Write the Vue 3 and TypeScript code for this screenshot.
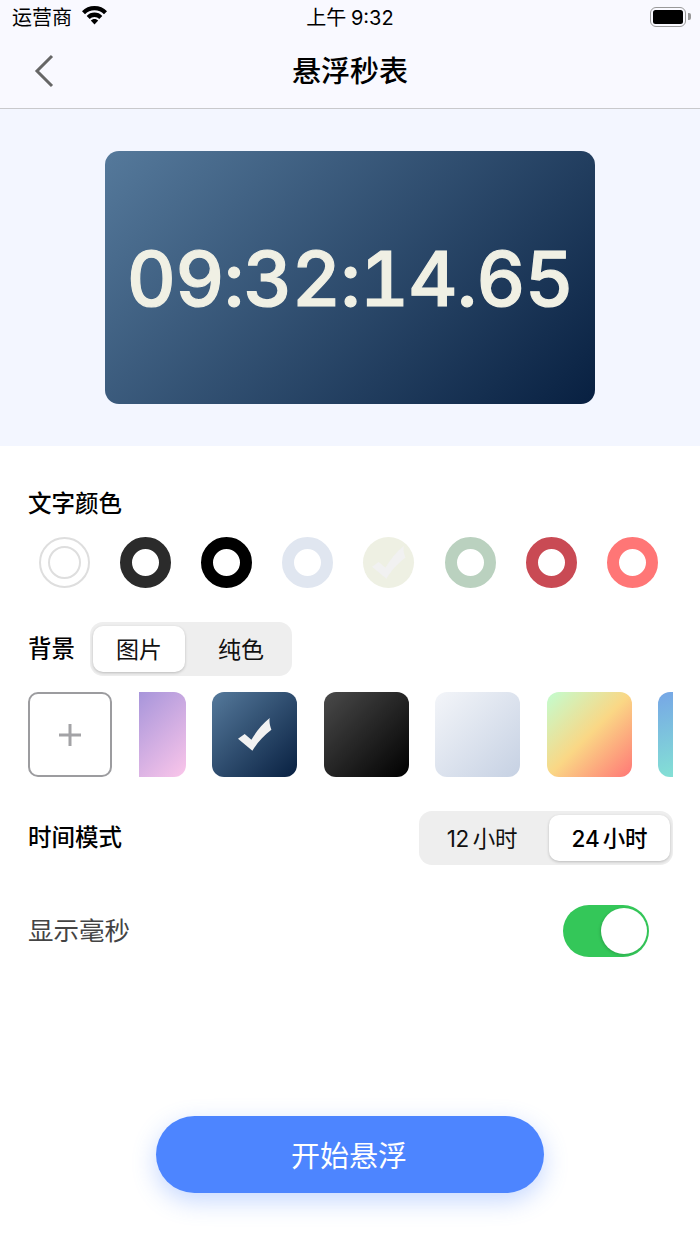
<template>
  <div class="page">
    <header class="top">
      <div class="status-bar">
        <div class="status-left">
          <span>运营商</span>
          <svg class="wifi" width="25" height="19" viewBox="0 0 25 19">
            <path d="M12.5 0C7.6 0 3.2 1.9 0 5.2L3 8.2C5.4 5.7 8.8 4.2 12.5 4.2s7.1 1.5 9.5 4l3-3C21.8 1.9 17.4 0 12.5 0z" fill="#000" />
            <path d="M12.5 6.6c-3 0-5.8 1.2-7.8 3.3l3 3c1.2-1.2 2.9-2 4.8-2s3.600 0.800 4.800 2l3-3c-2-2.100-4.800-3.300-7.800-3.300z" fill="#000" />
            <path d="M12.500 13c-1.500 0-2.800 0.600-3.700 1.500l3.700 4 3.700-4c-0.900-0.900-2.200-1.500-3.700-1.500z" fill="#000" />
          </svg>
        </div>
        <span class="status-time">上午 9:32</span>
        <div class="status-right">
          <span class="battery"><span class="battery-level"></span></span>
          <span class="battery-cap"></span>
        </div>
      </div>
      <div class="nav-bar">
        <svg class="back" width="20" height="34" viewBox="0 0 20 34">
          <path d="M18 2L3 17l15 15" fill="none" stroke="#666" stroke-width="3" />
        </svg>
        <h1 class="nav-title">悬浮秒表</h1>
      </div>
    </header>

    <section class="preview">
      <div class="clock-card">09:32:14.65</div>
    </section>

    <main class="settings">
      <h2 class="label">文字颜色</h2>
      <div class="colors">
        <div
          v-for="c in textColors"
          :key="c.color"
          class="swatch"
          :class="{ 'swatch-outline': c.outline, 'swatch-on': c.selected }"
          :style="{ borderColor: c.color, background: c.selected ? c.color : undefined }"
        >
          <svg v-if="c.selected" width="34" height="33" viewBox="0 0 34 33">
            <path :d="checkPath" fill="#f1f1f1" />
          </svg>
        </div>
      </div>

      <div class="bg-row">
        <h2 class="label">背景</h2>
        <div class="segment bg-segment">
          <div class="seg-item seg-on">图片</div>
          <div class="seg-item">纯色</div>
        </div>
      </div>

      <div class="thumb-row">
        <div class="add-thumb">
          <svg width="22" height="22" viewBox="0 0 22 22">
            <path d="M11 0v22M0 11h22" stroke="#a3a3a6" stroke-width="3" />
          </svg>
        </div>
        <div class="thumb-scroll">
          <div class="thumbs">
            <div class="thumb thumb-purple"></div>
            <div class="thumb thumb-navy">
              <svg width="34" height="33" viewBox="0 0 34 33">
                <path :d="checkPath" fill="#f2f2f2" />
              </svg>
            </div>
            <div class="thumb thumb-black"></div>
            <div class="thumb thumb-silver"></div>
            <div class="thumb thumb-rainbow"></div>
            <div class="thumb thumb-sea"></div>
          </div>
        </div>
      </div>

      <div class="mode-row">
        <h2 class="label">时间模式</h2>
        <div class="segment mode-segment">
          <div class="seg-item mode-item">12 小时</div>
          <div class="seg-item mode-item seg-on seg-strong">24 小时</div>
        </div>
      </div>

      <div class="ms-row">
        <span class="ms-label">显示毫秒</span>
        <div class="toggle"><span class="knob"></span></div>
      </div>

      <button class="start-button">开始悬浮</button>
    </main>
  </div>
</template>

<script setup lang="ts">
interface TextColor {
  color: string
  outline?: boolean
  selected?: boolean
}

const checkPath = 'M0 20.7L6.7 16 13.4 21.700C18 14 24 6 31.700 0 31 4 32 8 33.400 11.700 26 17 19 25 14.400 32.700z'

const textColors: TextColor[] = [
  { color: '#dedede', outline: true },
  { color: '#2b2b2b' },
  { color: '#000000' },
  { color: '#e0e6f0' },
  { color: '#eef0e3', selected: true },
  { color: '#bad1bf' },
  { color: '#c94a54' },
  { color: '#ff7676' }
]
</script>

<style>
html,
body {
  margin: 0;
  background: #fff;
}
</style>

<style scoped>
.page {
  width: 700px;
  height: 1244px;
  overflow: hidden;
  font-family: Inter, "Noto Sans CJK SC", sans-serif;
  color: #000;
  background: #fff;
}

.top {
  background: #f9f9ff;
  border-bottom: 1px solid #c9c9cc;
}

.status-bar {
  height: 36px;
  box-sizing: border-box;
  padding: 0 9px 3px 12px;
  display: grid;
  grid-template-columns: 1fr auto 1fr;
  align-items: center;
  font-size: 20px;
}

.status-left {
  display: flex;
  align-items: center;
  gap: 10px;
}

.wifi {
  margin-top: -2px;
}

.status-time {
  margin-left: -3px;
  word-spacing: -1px;
}

.status-right {
  display: flex;
  justify-content: flex-end;
  align-items: center;
}

.battery {
  width: 36px;
  height: 20px;
  box-sizing: border-box;
  border: 1.5px solid #999;
  border-radius: 6px;
  padding: 2px;
  display: flex;
}

.battery-level {
  flex: 1;
  background: #000;
  border-radius: 2.5px;
}

.battery-cap {
  width: 3px;
  height: 7px;
  margin-left: 2px;
  background: #999;
  border-radius: 0 2px 2px 0;
}

.nav-bar {
  position: relative;
  height: 72px;
  display: flex;
  align-items: center;
  justify-content: center;
}

.back {
  position: absolute;
  left: 34px;
  top: 18px;
}

.nav-title {
  margin: 0;
  font-size: 29px;
  font-weight: 500;
  line-height: 40px;
}

.preview {
  height: 337px;
  background: #f3f6ff;
  display: flex;
  justify-content: center;
  align-items: center;
}

.clock-card {
  width: 490px;
  height: 253px;
  border-radius: 14px;
  background: linear-gradient(135deg, #55799b 0%, #082041 100%);
  color: #f0f0e4;
  font-size: 76px;
  font-weight: 500;
  font-variant-numeric: tabular-nums;
  letter-spacing: -0.8px;
  -webkit-text-stroke: 1.2px #f0f0e4;
  display: flex;
  align-items: center;
  justify-content: center;
}

.settings {
  padding: 40px 27px 0 28px;
}

.label {
  margin: 0;
  font-size: 23.5px;
  font-weight: 500;
  line-height: 36px;
}

.colors {
  display: flex;
  gap: 30.1px;
  margin: 15px 0 0 11.1px;
}

.swatch {
  width: 51px;
  height: 51px;
  box-sizing: border-box;
  border-radius: 50%;
  border: 12px solid;
  display: flex;
  align-items: center;
  justify-content: center;
  flex: none;
}

.swatch-on {
  border-width: 0;
}

.swatch-outline {
  border-width: 2px;
}

.swatch-outline::after {
  content: "";
  width: 33px;
  height: 33px;
  box-sizing: border-box;
  border: 2px solid #dedede;
  border-radius: 50%;
}

.bg-row {
  display: flex;
  align-items: center;
  gap: 15px;
  margin-top: 34px;
}

.segment {
  display: flex;
  height: 54px;
  box-sizing: border-box;
  padding: 4px 3px;
  background: #eeeeee;
  border-radius: 13px;
}

.bg-segment {
  width: 202px;
}

.seg-item {
  display: flex;
  align-items: center;
  justify-content: center;
  width: 92px;
  font-size: 23px;
  padding-bottom: 2px;
  box-sizing: border-box;
  color: #111;
}

.bg-segment .seg-item:last-child {
  flex: 1;
  padding-left: 8px;
}

.seg-on {
  background: #fff;
  border-radius: 10px;
  box-shadow: 0 1px 3px rgba(0, 0, 0, 0.22);
}

.thumb-row {
  display: flex;
  margin-top: 16px;
  gap: 27px;
}

.add-thumb {
  width: 84px;
  height: 85px;
  box-sizing: border-box;
  border: 2px solid #9c9c9f;
  border-radius: 10px;
  display: flex;
  align-items: center;
  justify-content: center;
  flex: none;
}

.thumb-scroll {
  width: 534px;
  overflow: hidden;
}

.thumbs {
  display: flex;
  gap: 26.5px;
  margin-left: -38.5px;
}

.thumb {
  width: 85px;
  height: 85px;
  border-radius: 12px;
  flex: none;
  display: flex;
  align-items: center;
  justify-content: center;
}

.thumb-purple {
  background: linear-gradient(135deg, #8f87d6 0%, #fbc6ea 100%);
}

.thumb-navy {
  background: linear-gradient(135deg, #55799b 0%, #082041 100%);
}

.thumb-black {
  background: linear-gradient(135deg, #4a4a4a 0%, #000 100%);
}

.thumb-silver {
  background: linear-gradient(135deg, #f3f5f9 0%, #c6d1e3 100%);
}

.thumb-rainbow {
  background: linear-gradient(135deg, #c2fdd0 0%, #fad785 50%, #ff7676 100%);
}

.thumb-sea {
  background: linear-gradient(165deg, #76a6e6 0%, #84e2d4 85%);
}

.mode-row {
  display: flex;
  align-items: center;
  justify-content: space-between;
  margin-top: 34px;
}

.mode-segment {
  width: 254px;
  justify-content: space-between;
}

.mode-item {
  width: 120px;
  font-size: 22.5px;
  word-spacing: -2.5px;
  letter-spacing: -0.2px;
}

.mode-item:last-child {
  width: 121px;
}

.seg-strong {
  font-weight: 500;
  color: #000;
}

.ms-row {
  display: flex;
  align-items: center;
  justify-content: space-between;
  margin-top: 40px;
  padding-right: 24px;
}

.ms-label {
  font-size: 25.5px;
  line-height: 46px;
  margin-top: -1px;
  color: #444;
}

.toggle {
  width: 86px;
  height: 52px;
  box-sizing: border-box;
  padding: 3px 2px;
  border-radius: 26px;
  background: #34c759;
  display: flex;
  justify-content: flex-end;
}

.knob {
  width: 46px;
  height: 46px;
  border-radius: 50%;
  background: #fff;
  box-shadow: -1px 1px 3px rgba(0, 0, 0, 0.15);
}

.start-button {
  display: block;
  width: 388px;
  height: 77px;
  margin: 159px 0 0 128px;
  padding: 0 2px 2px 0;
  border: none;
  border-radius: 39px;
  background: #4d85ff;
  color: #fff;
  font-family: inherit;
  font-size: 29px;
  font-weight: 400;
  box-shadow: 0 8px 24px rgba(77, 133, 255, 0.32);
}
</style>
